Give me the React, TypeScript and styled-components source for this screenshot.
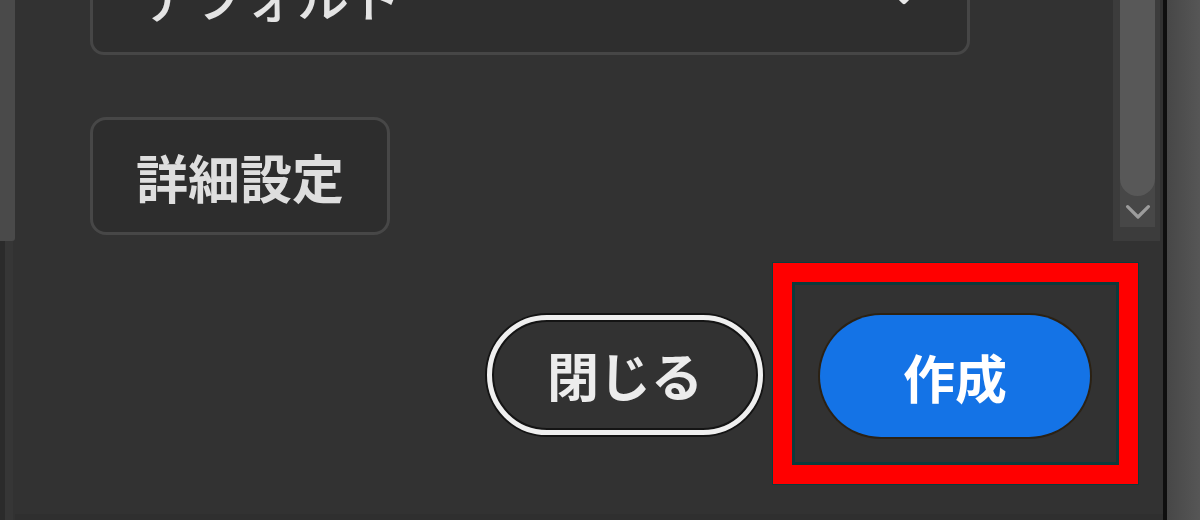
import styled, { createGlobalStyle } from 'styled-components';

const GlobalStyle = createGlobalStyle`
  html, body {
    margin: 0;
    padding: 0;
    background: #323232;
  }
  * {
    box-sizing: border-box;
  }
`;

const Root = styled.div`
  display: flex;
  width: 1200px;
  height: 520px;
  overflow: hidden;
  font-family: 'Noto Sans CJK JP', 'Noto Sans', sans-serif;
  background: #323232;
`;

const LeftRail = styled.div`
  display: flex;
  flex-direction: column;
  width: 15px;
  flex: none;
`;

const LeftRailTop = styled.div`
  height: 241px;
  background: #4a4a4a;
  border-bottom-right-radius: 3px;
`;

const LeftRailBottom = styled.div`
  flex: 1;
  background: linear-gradient(90deg, #2b2b2b 0 5px, #363636 5px 13px, #323232 13px);
`;

const Panel = styled.div`
  display: flex;
  flex-direction: column;
  flex: none;
  width: 1148px;
  border-bottom: 6px solid #2f2f2f;
`;

const Body = styled.div`
  display: flex;
  height: 241px;
`;

const Content = styled.div`
  display: flex;
  flex-direction: column;
  align-items: flex-start;
  gap: 62px;
  flex: 1;
  padding-left: 75px;
`;

const Picker = styled.div`
  display: flex;
  align-items: center;
  justify-content: space-between;
  width: 880px;
  height: 118px;
  margin-top: -63px;
  padding: 0 52px 0 48px;
  border: 3px solid #464646;
  border-radius: 14px;
  background: #2e2e2e;
  color: #e4e4e4;
  font-size: 52px;
  font-weight: 500;
`;

const PickerLabel = styled.span`
  line-height: 1;
`;

const PickerCaret = styled.span`
  display: flex;
  margin-top: 4px;
`;

const AdvancedButton = styled.button`
  display: flex;
  align-items: center;
  justify-content: center;
  width: 300px;
  height: 118px;
  border: 3px solid #474747;
  border-radius: 16px;
  background: #2d2d2d;
  color: #dedede;
  font-family: inherit;
  font-size: 52px;
  font-weight: 700;
  padding: 0;
`;

const Scrollbar = styled.div`
  display: flex;
  flex-direction: column;
  align-items: center;
  width: 47px;
  margin-right: 3px;
  background: #3c3c3c;
  padding: 0 5px 14px 7px;
`;

const Thumb = styled.div`
  width: 35px;
  height: 196px;
  background: #585858;
  border-radius: 0 0 18px 18px;
  position: relative;
  z-index: 1;
`;

const ScrollArrow = styled.div`
  display: flex;
  align-items: center;
  justify-content: center;
  flex: 1;
  width: 35px;
  background: #474747;
  margin-top: -18px;
  padding-top: 18px;
`;

const Footer = styled.div`
  display: flex;
  flex: 1;
  justify-content: flex-end;
  align-items: flex-start;
  padding: 22px 25px 0 0;
`;

const FooterRow = styled.div`
  display: flex;
  align-items: center;
  gap: 10px;
`;

const CloseButton = styled.button`
  display: flex;
  align-items: center;
  justify-content: center;
  width: 276px;
  height: 120px;
  margin-top: 2px;
  border: 5px solid #efefef;
  border-radius: 60px;
  background: transparent;
  color: #ececec;
  font-family: inherit;
  font-size: 52px;
  font-weight: 700;
  box-shadow: 0 0 0 2px #141414, inset 0 0 0 2px #141414;
  padding: 0;
`;

const Highlight = styled.div`
  border: 19px solid #ff0000;
  padding: 33px 29px 28px 28px;
  box-shadow: inset 0 0 0 3px #0c3a3b, 0 0 0 1px #0c3a3b;
`;

const CreateButton = styled.button`
  display: flex;
  align-items: center;
  justify-content: center;
  width: 270px;
  height: 122px;
  border: none;
  border-radius: 61px;
  background: #1473e6;
  color: #ffffff;
  font-family: inherit;
  font-size: 52px;
  font-weight: 700;
  box-shadow: 0 0 0 2px #2b2113;
  padding: 0;
`;

const Divider = styled.div`
  width: 4px;
  flex: none;
  background: #0f0f0f;
`;

const RightRail = styled.div`
  flex: 1;
  background: linear-gradient(90deg, #474747, #565656);
`;

function ChevronDown({ size, color, stroke }: { size: number; color: string; stroke: number }) {
  return (
    <svg width={size} height={size * 0.6} viewBox="0 0 20 12" fill="none">
      <path d="M2 2 L10 10 L18 2" stroke={color} strokeWidth={stroke} strokeLinecap="round" strokeLinejoin="round" />
    </svg>
  );
}

export default function App() {
  return (
    <Root>
      <GlobalStyle />
      <LeftRail>
        <LeftRailTop />
        <LeftRailBottom />
      </LeftRail>
      <Panel>
        <Body>
          <Content>
            <Picker>
              <PickerLabel>デフォルト</PickerLabel>
              <PickerCaret>
                <ChevronDown size={22} color="#e8e8e8" stroke={4} />
              </PickerCaret>
            </Picker>
            <AdvancedButton>詳細設定</AdvancedButton>
          </Content>
          <Scrollbar>
            <Thumb />
            <ScrollArrow>
              <ChevronDown size={26} color="#9c9c9c" stroke={2.5} />
            </ScrollArrow>
          </Scrollbar>
        </Body>
        <Footer>
          <FooterRow>
            <CloseButton>閉じる</CloseButton>
            <Highlight>
              <CreateButton>作成</CreateButton>
            </Highlight>
          </FooterRow>
        </Footer>
      </Panel>
      <Divider />
      <RightRail />
    </Root>
  );
}
